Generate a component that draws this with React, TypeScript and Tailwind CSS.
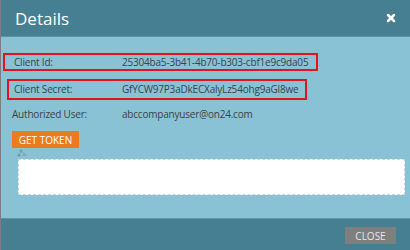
import { X } from "lucide-react";

const font = { fontFamily: '"Open Sans", "Liberation Sans", sans-serif' };

export default function App() {
    return (
        <div
            className="flex h-[250px] w-[410px] flex-col overflow-hidden border-l border-[#7d7d7d] text-[#3b4348]"
            style={font}
        >
            {/* header */}
            <div className="flex h-[37px] shrink-0 items-center justify-between border-b border-[#5d93a4] bg-[#467f91] pl-[14px] pr-[13px]">
                <h1 className="text-[17px] leading-none text-white">Details</h1>
                <X className="h-[12px] w-[12px] text-white" strokeWidth={5} />
            </div>

            {/* body */}
            <div className="flex flex-1 flex-col whitespace-nowrap bg-[#89c2d4] text-[10px] tracking-[-0.2px]">
                <div className="ml-[2px] mt-[16px] flex h-[18px] w-[315px] items-center border-2 border-[#e3141b] pl-[9px]">
                    <span className="w-[108px] shrink-0">Client Id:</span>
                    <span>25304ba5-3b41-4b70-b303-cbf1e9c9da05</span>
                </div>

                <div className="ml-[6px] mt-[8px] flex h-[21px] w-[300px] items-center border-2 border-[#e3141b] pl-[5px]">
                    <span className="w-[108px] shrink-0">Client Secret:</span>
                    <span>GfYCW97P3aDkECXalyLz54ohg9aGl8we</span>
                </div>

                <div className="ml-[11px] mt-[5px] flex h-[18px] items-center">
                    <span className="w-[110px] shrink-0">Authorized User:</span>
                    <span>abccompanyuser@on24.com</span>
                </div>

                <button className="ml-[11px] mt-[8px] flex h-[17px] w-[67px] items-center justify-center bg-[#ec7a22] text-[10px] leading-none tracking-normal text-white">
                    GET TOKEN
                </button>

                <svg className="ml-[16px] mt-[1px] h-[8px] w-[12px]" viewBox="0 0 12 8">
                    <circle cx="4" cy="2" r="1.5" fill="#6f98a8" />
                    <circle cx="2" cy="6" r="1.5" fill="#6f98a8" />
                    <circle cx="7" cy="6" r="1.5" fill="#7ea7b5" />
                    <path d="M4 2 L2 6 M4 2 L10 6" stroke="#7ea7b5" strokeWidth="0.8" />
                </svg>

                <div className="ml-[17px] mt-[2px] h-[36px] w-[387px] border border-dashed border-[#c6dbe2] bg-white" />
            </div>

            {/* footer */}
            <div className="flex h-[32px] shrink-0 items-center justify-end border-t border-[#5d93a4] bg-[#467f91] pr-[14px]">
                <button className="mt-[2px] flex h-[17px] w-[51px] items-center justify-center bg-[#7f7f7f] text-[10px] leading-none text-[#e8e8e8]">
                    CLOSE
                </button>
            </div>
        </div>
    );
}
